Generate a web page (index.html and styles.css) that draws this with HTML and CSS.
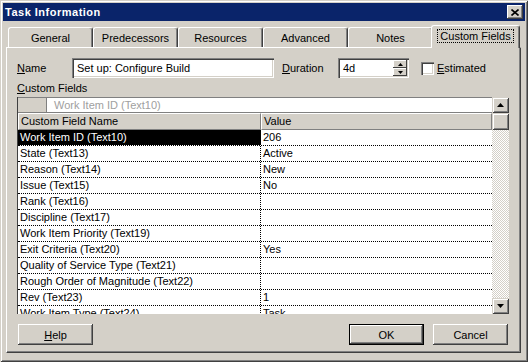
FILE: index.html
```html
<!DOCTYPE html>
<html lang="en">
<head>
    <meta charset="UTF-8" />
    <title>Task Information</title>
    <link rel="stylesheet" href="styles.css">
</head>
<body>
    <!-- DIALOG WINDOW -->
    <div class="window">
        <div class="titlebar">
            <span class="title">Task Information</span>
            <span class="close-btn">
                <svg width="8" height="7" viewBox="0 0 8 7"><path d="M0.5 0.5L7.5 6.5M7.5 0.5L0.5 6.5" stroke="#000" stroke-width="1.6" fill="none"/></svg>
            </span>
        </div>

        <!-- TABS -->
        <div class="tabs">
            <div class="tab">General</div>
            <div class="tab">Predecessors</div>
            <div class="tab">Resources</div>
            <div class="tab">Advanced</div>
            <div class="tab">Notes</div>
            <div class="tab active"><span class="focus">Custom Fields</span></div>
        </div>

        <!-- TAB PANEL -->
        <div class="panel">
            <div class="field-row">
                <span class="lbl-name"><u>N</u>ame</span>
                <div class="textbox name-box">Set up: Configure Build</div>
                <span class="lbl-dur"><u>D</u>uration</span>
                <div class="textbox dur-box">
                    <span>4d</span>
                    <div class="spin">
                        <div class="spin-btn"><svg width="5" height="3" viewBox="0 0 5 3"><path d="M2.5 0L5 3H0z" fill="#000"/></svg></div>
                        <div class="spin-btn"><svg width="5" height="3" viewBox="0 0 5 3"><path d="M0 0H5L2.5 3z" fill="#000"/></svg></div>
                    </div>
                </div>
                <div class="checkbox"></div>
                <span class="lbl-est"><u>E</u>stimated</span>
            </div>

            <div class="cf-label"><u>C</u>ustom Fields</div>

            <!-- CUSTOM FIELDS GRID -->
            <div class="grid">
                <div class="grid-body">
                    <div class="edit-row">
                        <div class="edit-corner"></div>
                        <div class="edit-cell">Work Item ID (Text10)</div>
                    </div>
                    <div class="header-row">
                        <div class="hcell hcell-name">Custom Field Name</div>
                        <div class="hcell hcell-value">Value</div>
                    </div>
                    <div class="rows"></div>
                </div>
                <div class="vscroll">
                    <div class="sb-btn"><svg width="7" height="4" viewBox="0 0 7 4"><path d="M3.5 0L7 4H0z" fill="#000"/></svg></div>
                    <div class="sb-thumb"></div>
                    <div class="sb-track"></div>
                    <div class="sb-btn"><svg width="7" height="4" viewBox="0 0 7 4"><path d="M0 0H7L3.5 4z" fill="#000"/></svg></div>
                </div>
            </div>

            <!-- BUTTONS -->
            <div class="buttons">
                <button class="btn help-btn"><u>H</u>elp</button>
                <span class="spacer"></span>
                <button class="btn ok-btn">OK</button>
                <button class="btn cancel-btn">Cancel</button>
            </div>
        </div>
    </div>

    <script>
        // CUSTOM FIELD ROWS
        let fieldsArr = [
            { name: "Work Item ID (Text10)", value: "206", selected: true },
            { name: "State (Text13)", value: "Active" },
            { name: "Reason (Text14)", value: "New" },
            { name: "Issue (Text15)", value: "No" },
            { name: "Rank (Text16)", value: "" },
            { name: "Discipline (Text17)", value: "" },
            { name: "Work Item Priority (Text19)", value: "" },
            { name: "Exit Criteria (Text20)", value: "Yes" },
            { name: "Quality of Service Type (Text21)", value: "" },
            { name: "Rough Order of Magnitude (Text22)", value: "" },
            { name: "Rev (Text23)", value: "1" },
            { name: "Work Item Type (Text24)", value: "Task" },
        ];

        let rowsCont = document.querySelector(".rows");

        fieldsArr.forEach(function (field) {
            let row = document.createElement("div");
            row.setAttribute("class", "row");
            row.innerHTML = `<div class="cell-name ${field.selected ? "selected" : ""}">${field.name}</div>
                <div class="cell-value">${field.value}</div>`;
            rowsCont.append(row);
        });
    </script>
</body>
</html>
```

FILE: styles.css
```css
* {
box-sizing: border-box;
}

body {
margin: 0;
padding: 0;
background-color: #d4d0c8;
font-family: "Liberation Sans", Arial, sans-serif;
font-size: 11px;
color: #000;
}

u {
text-decoration: underline;
text-underline-offset: 1px;
}

.window {
width: 528px;
height: 362px;
padding: 3px;
background-color: #d4d0c8;
box-shadow: inset 1px 1px #d4d0c8, inset -1px -1px #404040, inset 2px 2px #fff, inset -2px -2px #808080;
display: flex;
flex-direction: column;
}

.titlebar {
height: 18px;
background-color: #0a246a;
display: flex;
align-items: center;
justify-content: space-between;
padding: 0 2px;
}

.title {
color: #fff;
font-weight: bold;
letter-spacing: 0.5px;
}

.close-btn {
width: 16px;
height: 14px;
background-color: #d4d0c8;
box-shadow: inset -1px -1px #404040, inset 1px 1px #fff, inset -2px -2px #808080;
display: flex;
align-items: center;
justify-content: center;
}

/* TABS */
.tabs {
display: flex;
align-items: flex-end;
height: 22px;
margin: 4px 4px 0 3px;
padding-left: 2px;
}

.tab {
width: 85px;
height: 20px;
border: 1px solid #fff;
border-bottom: none;
border-right-color: #404040;
border-radius: 3px 3px 0 0;
box-shadow: inset -1px 0 #808080;
text-align: center;
padding-top: 3px;
line-height: 14px;
}

.tab.active {
width: 89px;
height: 23px;
margin-left: -2px;
margin-bottom: -1px;
position: relative;
z-index: 1;
background-color: #d4d0c8;
padding-top: 3px;
}

.focus {
display: inline-block;
border: 1px dotted #000;
line-height: 12px;
padding: 0 2px;
}

/* PANEL */
.panel {
height: 306px;
margin: 0 4px 0 3px;
border: 1px solid;
border-color: #fff #404040 #404040 #fff;
box-shadow: inset -1px -1px #808080;
padding: 10px 11px 7px 10px;
display: flex;
flex-direction: column;
}

.field-row {
display: flex;
align-items: center;
height: 20px;
}

.lbl-name {
width: 55px;
}

.textbox {
height: 20px;
background-color: #fff;
box-shadow: inset 1px 1px #808080, inset 2px 2px #404040, inset -1px -1px #fff, inset -2px -2px #d4d0c8;
display: flex;
align-items: center;
}

.name-box {
width: 202px;
padding-left: 5px;
}

.lbl-dur {
width: 56px;
margin-left: 8px;
}

.dur-box {
width: 71px;
padding: 2px 2px 2px 5px;
}

.spin {
margin-left: auto;
width: 14px;
height: 16px;
display: flex;
flex-direction: column;
}

.spin-btn {
height: 8px;
background-color: #d4d0c8;
box-shadow: inset -1px -1px #404040, inset 1px 1px #fff;
display: flex;
align-items: center;
justify-content: center;
}

.checkbox {
width: 13px;
height: 13px;
margin-left: 12px;
background-color: #fff;
box-shadow: inset 1px 1px #808080, inset 2px 2px #404040, inset -1px -1px #fff, inset -2px -2px #d4d0c8;
}

.lbl-est {
margin-left: 3px;
}

.cf-label {
margin-top: 3px;
height: 14px;
line-height: 14px;
}

/* GRID */
.grid {
display: flex;
height: 217px;
margin-top: 2px;
}

.grid-body {
width: 475px;
border-left: 1px solid #404040;
display: flex;
flex-direction: column;
}

.edit-row {
display: flex;
height: 16px;
border-top: 1px solid #808080;
}

.edit-corner {
width: 29px;
background-color: #d4d0c8;
border-right: 1px solid #808080;
border-bottom: 1px solid #808080;
}

.edit-cell {
flex: 1;
background-color: #fff;
color: #a0a0a0;
padding-left: 7px;
line-height: 14px;
border-bottom: 1px solid #808080;
}

.header-row {
display: flex;
height: 17px;
}

.hcell {
background-color: #d4d0c8;
border-top: 1px solid #fff;
border-left: 1px solid #fff;
border-right: 1px solid #808080;
border-bottom: 1px solid #808080;
padding-left: 2px;
line-height: 15px;
}

.hcell-name {
width: 243px;
}

.hcell-value {
flex: 1;
}

.rows {
height: 184px;
overflow: hidden;
background-color: #fff;
}

.row {
display: flex;
height: 16px;
border-bottom: 1px dotted #000;
line-height: 15px;
}

.cell-name {
width: 243px;
border-right: 1px dotted #000;
padding-left: 2px;
white-space: nowrap;
}

.cell-name.selected {
background-color: #000;
color: #fff;
}

.cell-value {
flex: 1;
padding-left: 2px;
}

/* SCROLLBAR */
.vscroll {
width: 17px;
display: flex;
flex-direction: column;
background: repeating-conic-gradient(#d4d0c8 0 25%, #fff 0 50%) 0 0 / 2px 2px;
}

.sb-btn,
.sb-thumb {
height: 16px;
background-color: #d4d0c8;
box-shadow: inset 1px 1px #d4d0c8, inset -1px -1px #404040, inset 2px 2px #fff, inset -2px -2px #808080;
display: flex;
align-items: center;
justify-content: center;
}

.sb-thumb {
height: 17px;
}

.sb-track {
flex: 1;
}

/* BUTTONS */
.buttons {
display: flex;
margin-top: 10px;
height: 21px;
}

.spacer {
flex: 1;
}

.btn {
width: 75px;
height: 21px;
font: inherit;
color: #000;
background-color: #d4d0c8;
border: none;
padding: 0;
box-shadow: inset -1px -1px #404040, inset 1px 1px #fff, inset -2px -2px #808080;
}

.help-btn {
margin-left: 1px;
}

.ok-btn {
border: 1px solid #000;
}

.cancel-btn {
margin-left: 9px;
margin-right: 1px;
}
```
